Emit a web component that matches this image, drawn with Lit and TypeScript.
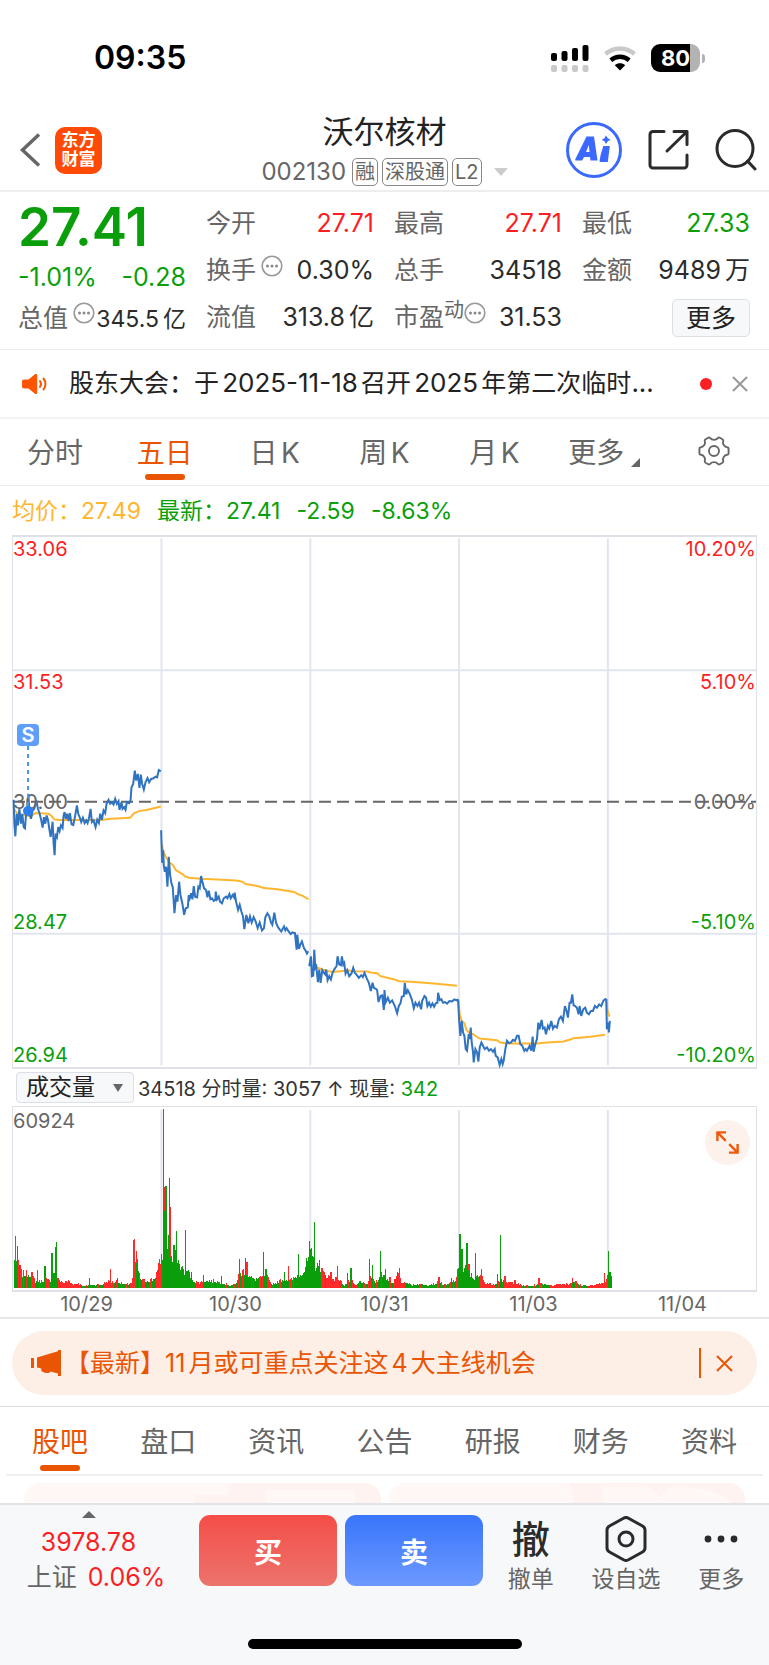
import { LitElement, html, svg, css } from "lit";
import { customElement, property, state } from "lit/decorators.js";
import { classMap } from "lit/directives/class-map.js";

/** One trading session: its drawing origin, the price line and the average line. */
interface Session {
  dx: number;
  dy: number;
  price: string;
  average: string;
}

const SESSIONS: Session[] = [
  {
    dx: -36,
    dy: -165,
    price:
      "38,958 40,1030 43,1068 47,1000 51,1035 55,985 60,1030 64,1000 68,1040 72,1044 75,1005 78,990 82,940 86,1000 90,1015 95,990 100,985 106,960 111,985 116,1000 121,1020 125,1042 129,1010 133,1030 137,1005 141,1018 145,1045 149,1070 152,1050 155,1024 158,1090 161,1125 164,1060 168,1070 172,1040 176,1052 180,1035 185,1043 188,1005 191,995 195,1015 199,1000 203,1022 207,998 212,1032 217,1034 222,1010 228,975 232,1000 237,1012 241,1025 246,1012 251,1028 256,1020 260,1028 264,1015 269,985 273,1025 278,1020 284,1040 289,1018 294,1028 298,1000 303,1018 308,990 313,998 317,970 323,958 328,970 333,965 338,972 343,955 348,970 353,962 356,988 362,965 365,985 370,980 374,988 378,965 385,968 389,960 392,920 397,910 402,870 406,900 411,880 416,922 420,882 424,910 429,927 434,905 440,892 445,905 451,895 458,893 464,888 469,890 474,868 480,872",
    average:
      "38,985 50,1000 75,1005 90,1008 97,1002 103,998 143,1000 150,1005 160,1017 175,1019 300,1019 330,1015 388,1012 400,998 415,992 440,988 465,982 480,978",
  },
  {
    dx: 414,
    dy: 795,
    price:
      "31,90 34,188 37,150 39,195 42,215 46,200 50,260 54,170 58,225 62,250 66,262 71,340 76,285 80,305 85,245 89,285 95,312 100,345 105,325 111,322 114,285 117,295 121,280 125,298 129,258 133,290 139,292 143,260 147,265 151,228 156,250 160,265 166,270 170,292 174,272 179,298 184,295 189,303 194,300 195,275 199,298 204,290 208,305 214,310 219,295 226,290 230,295 236,282 240,295 246,285 250,292 252,278 256,305 262,330 267,315 272,335 277,350 281,388 287,345 293,370 298,350 303,368 309,352 315,365 321,385 327,368 334,392 340,385 344,352 350,340 356,350 361,368 365,375 371,338 376,368 382,382 388,390 392,395 400,380 404,392 408,385 414,395 420,403 425,398 433,400 438,450 440,405 445,448 449,435 454,425 460,445 466,455 469,462 473,455",
    average:
      "33,130 38,155 46,172 56,188 65,193 75,210 85,216 95,222 102,229 115,233 150,236 200,238 255,241 275,245 285,252 320,258 340,264 380,268 430,276 445,284 455,287 470,296 474,297",
  },
  {
    dx: 414,
    dy: 795,
    price:
      "476,500 481,470 484,530 488,528 491,450 494,505 497,500 502,548 506,510 510,550 515,512 520,520 524,525 527,510 531,542 536,530 541,540 546,520 552,508 558,500 561,470 566,495 571,497 574,470 578,495 581,490 585,522 590,512 596,530 603,522 608,505 613,520 619,527 625,535 632,527 637,533 642,520 648,535 655,550 661,575 666,550 670,565 676,568 680,572 684,608 690,590 695,588 700,632 702,572 705,610 712,595 718,610 725,603 733,620 740,642 745,620 750,612 754,592 760,590 763,550 767,585 772,572 777,582 784,600 790,627 795,610 801,620 806,610 812,630 815,605 822,590 827,595 831,620 836,610 841,622 846,612 851,622 856,612 861,610 863,580 868,602 873,600 878,610 884,608 890,613 897,605 905,606 912,600 918,603 923,600",
    average:
      "490,500 510,508 530,514 545,517 570,515 590,512 610,515 650,516 660,519 680,521 690,530 710,535 730,539 745,545 780,547 850,552 920,559",
  },
  {
    dx: 1164,
    dy: 1095,
    price:
      "173,300 176,360 180,410 184,365 188,400 192,410 196,450 200,455 205,405 208,420 211,385 214,430 218,460 220,490 225,450 230,460 234,488 238,445 243,430 248,440 253,450 260,445 266,455 272,450 278,458 283,450 286,470 292,475 298,498 303,480 307,495 310,485 315,450 320,425 326,432 332,430 338,422 344,425 350,410 355,410 360,435 366,440 372,455 376,450 380,455 388,440 393,455 397,412 400,458 405,435 410,420 414,370 418,390 421,375 424,362 428,388 433,385 437,405 443,380 447,388 453,365 458,388 463,380 470,385 476,360 482,352 488,365 494,320 499,335 503,355 508,310 512,310 516,285 520,318 525,320 530,325 535,345 538,320 543,350 549,330 555,325 560,340 566,345 572,335 578,335 584,320 590,325 597,315 603,320 610,303 618,298",
    average:
      "174,302 178,345 184,365 192,372 198,392 205,400 218,405 228,412 238,418 290,423 300,430 320,433 410,433 440,430 490,427 510,421 520,417 570,413 615,407",
  },
  {
    dx: 1164,
    dy: 1095,
    price: "618,298 620,390 624,370 626,400 629,365",
    average: "619,300 622,335 628,352",
  },
];

/** Typical volume along the time axis, as x/height anchors. */
const VOLUME_LEVEL: number[][] = [
  [38, 95], [50, 90], [60, 50], [90, 50], [100, 25], [120, 25], [130, 30], [145, 25], [160, 60], [170, 30],
  [185, 20], [200, 25], [215, 15], [230, 18], [245, 8], [270, 12], [300, 12], [320, 25], [335, 20], [345, 25],
  [370, 12], [390, 18], [398, 70], [405, 90], [412, 60], [420, 30], [435, 25], [450, 30], [460, 32], [470, 60],
  [485, 120], [490, 300], [495, 250], [500, 170], [508, 130], [515, 90], [525, 140], [535, 80], [550, 60],
  [560, 60], [575, 30], [590, 20], [610, 25], [640, 25], [660, 20], [690, 10], [705, 15], [715, 50], [730, 60],
  [745, 40], [760, 30], [780, 35], [795, 50], [810, 15], [830, 20], [850, 35], [865, 25], [880, 35], [895, 50],
  [910, 60], [925, 110], [935, 110], [945, 70], [955, 70], [970, 50], [985, 40], [1000, 35], [1015, 30],
  [1030, 10], [1050, 30], [1065, 8], [1080, 25], [1095, 10], [1110, 35], [1125, 20], [1140, 50], [1154, 40],
  [1164, 25], [1177, 20], [1192, 45], [1202, 20], [1217, 22], [1232, 12], [1252, 14], [1282, 12], [1302, 15],
  [1317, 22], [1332, 10], [1352, 20], [1367, 30], [1377, 110], [1387, 60], [1397, 70], [1407, 50], [1417, 35],
  [1442, 40], [1452, 20], [1472, 14], [1487, 18], [1502, 30], [1517, 20], [1542, 20], [1562, 10], [1592, 8],
  [1617, 15], [1632, 15], [1652, 10], [1672, 15], [1702, 15], [1722, 25], [1737, 12], [1762, 8], [1792, 12],
  [1812, 25], [1822, 45], [1827, 50], [1835, 30],
];

/** Single bars that stand out: x, height, rising (1) or falling (0). */
const VOLUME_SPIKES: number[][] = [
  [43, 158, 1], [48, 128, 0], [109, 55, 1], [131, 68, 0], [152, 107, 0], [163, 125, 0], [166, 140, 0],
  [264, 30, 0], [327, 57, 1], [348, 32, 0], [396, 145, 1], [399, 150, 1], [405, 112, 1], [409, 90, 0],
  [487, 540, 0], [491, 305, 1], [495, 310, 0], [505, 333, 0], [508, 245, 1], [519, 130, 0], [526, 172, 0],
  [553, 175, 0], [572, 50, 0], [607, 40, 0], [661, 37, 0], [715, 88, 0], [733, 92, 0], [738, 80, 1],
  [788, 109, 0], [795, 58, 0], [850, 50, 0], [863, 66, 1], [893, 105, 0], [925, 142, 0], [932, 122, 1],
  [940, 201, 0], [955, 85, 0], [965, 62, 1], [990, 50, 1], [1009, 68, 1], [1039, 47, 0], [1050, 60, 0],
  [1105, 90, 0], [1115, 70, 0], [1138, 113, 0], [1154, 57, 0], [1168, 35, 1], [1190, 50, 0], [1197, 60, 1],
  [1315, 33, 1], [1352, 30, 0], [1372, 55, 1], [1378, 163, 0], [1384, 118, 0], [1399, 137, 0], [1405, 72, 1],
  [1425, 107, 0], [1442, 58, 1], [1490, 42, 0], [1500, 162, 0], [1513, 38, 1], [1543, 26, 1], [1615, 32, 1],
  [1715, 30, 1], [1812, 45, 1], [1823, 112, 0], [1828, 50, 0], [1833, 25, 0],
];

const RISING_RANGES = [
  [176, 236], [310, 335], [385, 401], [465, 484], [592, 606], [975, 1015], [1200, 1212], [1442, 1482],
  [1517, 1552], [1652, 1712], [1772, 1820],
];
const FALLING_RANGES = [[486, 570], [905, 960], [1375, 1437], [1821, 1840]];

const inside = (ranges: number[][], x: number) => ranges.some(([a, b]) => x >= a && x <= b);

function levelAt(x: number): number {
  for (let i = 1; i < VOLUME_LEVEL.length; i++) {
    const [x0, h0] = VOLUME_LEVEL[i - 1];
    const [x1, h1] = VOLUME_LEVEL[i];
    if (x <= x1) return h0 + ((h1 - h0) * (x - x0)) / (x1 - x0);
  }
  return 0;
}

/** Builds one path of bars for each direction. */
function volumePaths(): { up: string; down: string } {
  const base = 547;
  let up = "";
  let down = "";
  let seed = 7;
  for (let x = 38; x <= 1833; x += 3) {
    seed = (seed * 1103515245 + 12345) % 2147483648;
    const noise = seed / 2147483648;
    const height = Math.max(6, Math.round(levelAt(x) * (0.65 + noise * 0.45)));
    const rising = inside(RISING_RANGES, x) || (!inside(FALLING_RANGES, x) && noise > 0.66);
    const bar = `M${x} ${base}v${-height}h3v${height}z`;
    if (rising) up += bar;
    else down += bar;
  }
  for (const [x, height, rising] of VOLUME_SPIKES) {
    const bar = `M${x - 1} ${base}v${-height}h4v${height}z`;
    if (rising) up += bar;
    else down += bar;
  }
  return { up, down };
}

const VOLUME = volumePaths();

const shared = css`
  :host,
  * {
    box-sizing: border-box;
  }
  button,
  select {
    font: inherit;
    color: inherit;
    border: 0;
    margin: 0;
    padding: 0;
    background: none;
    cursor: pointer;
  }
  a {
    color: inherit;
    text-decoration: none;
  }
  svg {
    display: block;
    flex: none;
  }
`;

@customElement("status-bar")
export class StatusBar extends LitElement {
  static styles = [
    shared,
    css`
      :host {
        display: flex;
        justify-content: space-between;
        align-items: center;
        padding: 34px 64px 32px 94px;
        color: #000;
      }
      .time {
        font-size: 32px;
        line-height: 48px;
        font-weight: 600;
      }
      .icons {
        display: flex;
        align-items: center;
        gap: 15px;
      }
      .battery {
        display: flex;
        align-items: center;
        gap: 2px;
      }
      .cell {
        width: 49px;
        height: 28px;
        border-radius: 9px;
        background: linear-gradient(90deg, #000 80%, #b3b3b3 80%);
        color: #fff;
        font-size: 22px;
        line-height: 28px;
        font-weight: 700;
        text-align: center;
      }
      .nub {
        width: 3px;
        height: 9px;
        border-radius: 0 3px 3px 0;
        background: #b3b3b3;
      }
    `,
  ];

  render() {
    return html`
      <span class="time">09:35</span>
      <div class="icons">
        <svg width="38" height="27" viewBox="0 0 38 27" aria-hidden="true">
          <g fill="#000">
            <rect x="0" y="8" width="6" height="8" rx="2" />
            <rect x="10.500" y="6" width="6" height="10" rx="2" />
            <rect x="21" y="3" width="6" height="13" rx="2" />
            <rect x="31.500" y="0" width="6" height="16" rx="2" />
          </g>
          <g fill="#c9c9c9">
            <rect x="0" y="20" width="6" height="7" rx="2" />
            <rect x="10.500" y="20" width="6" height="7" rx="2" />
            <rect x="21" y="20" width="6" height="7" rx="2" />
            <rect x="31.500" y="20" width="6" height="7" rx="2" />
          </g>
        </svg>
        <svg width="32" height="25" viewBox="0 0 32 25" fill="none" aria-hidden="true">
          <path d="M1.500 8C10 .6 22 .6 30.500 8" stroke="#c9c9c9" stroke-width="4.400" />
          <path d="M6.800 14.200c5.500-4.600 12.900-4.600 18.400 0" stroke="#000" stroke-width="4.400" />
          <path d="M16 24.500l-5.200-5.300c3-2.500 7.400-2.500 10.400 0z" fill="#000" />
        </svg>
        <div class="battery"><span class="cell">80</span><span class="nub"></span></div>
      </div>
    `;
  }
}

@customElement("stock-header")
export class StockHeader extends LitElement {
  static styles = [
    shared,
    css`
      :host {
        display: grid;
        grid-template-columns: 1fr auto 1fr;
        align-items: center;
        height: 78px;
        padding: 0 12px 10px;
        border-bottom: 2px solid #eee;
      }
      .left,
      .right {
        display: flex;
        align-items: center;
      }
      .left {
        gap: 11px;
        padding-left: 6px;
      }
      .right {
        justify-content: flex-end;
        gap: 25px;
      }
      .brand {
        width: 47px;
        height: 47px;
        border-radius: 10px;
        background: #ff4a05;
        color: #fff;
        font-size: 17px;
        line-height: 19px;
        font-weight: 700;
        text-align: center;
        padding-top: 4px;
      }
      .middle {
        display: flex;
        flex-direction: column;
        align-items: center;
        gap: 8px;
      }
      h1 {
        margin: 0;
        font-size: 31px;
        line-height: 36px;
        font-weight: 400;
        color: #222;
      }
      .code {
        display: flex;
        align-items: center;
        gap: 4px;
        color: #666;
        font-size: 24px;
        line-height: 28px;
      }
      .number {
        padding-right: 2px;
      }
      .tag {
        border: 1px solid #888;
        border-radius: 5px;
        padding: 0 2px;
        font-size: 20px;
        line-height: 26px;
      }
      .caret {
        margin-left: 8px;
      }
    `,
  ];

  render() {
    return html`
      <div class="left">
        <button aria-label="返回">
          <svg width="26" height="36" viewBox="0 0 26 36" fill="none" stroke="#666" stroke-width="3.500">
            <path d="M21 2.500L4.500 18L21 33.500" />
          </svg>
        </button>
        <div class="brand">东方<br />财富</div>
      </div>
      <div class="middle">
        <h1>沃尔核材</h1>
        <div class="code">
          <span class="number">002130</span>
          <span class="tag">融</span>
          <span class="tag">深股通</span>
          <span class="tag">L2</span>
          <svg class="caret" width="14" height="8" viewBox="0 0 14 8"><path d="M0 0h14L7 8z" fill="#ccc" /></svg>
        </div>
      </div>
      <div class="right">
        <button aria-label="Ai">
          <svg width="58" height="58" viewBox="0 0 58 58">
            <circle cx="29" cy="29" r="26.500" fill="none" stroke="#3b68ff" stroke-width="3" />
            <path
              fill="#3b68ff"
              fill-rule="evenodd"
              d="M21.500 15.500h7.500l3.500 24h-7l-.5-3.500h-6l-1.800 3.500h-6.200c-.8 0-1-.6-.7-1.300zM21 31h3.500l-.7-7z"
            />
            <path fill="#3b68ff" d="M38.300 25h6.500l-2 16h-7.500c-.6 0-.8-.4-.7-.9l1-6zM41 14.500l1.800 2.700 2.700 1.500-2.700 1.500-1.800 2.700-1.600-2.700-2.700-1.500 2.700-1.500z" />
          </svg>
        </button>
        <button aria-label="分享">
          <svg width="42" height="42" viewBox="0 0 42 42" fill="none" stroke="#2b2b2b" stroke-width="3" stroke-linecap="round" stroke-linejoin="round">
            <path d="M16 2.500H5a3 3 0 0 0-3 3V36a3 3 0 0 0 3 3h31a3 3 0 0 0 3-3V26M26 2.500h13v13M39 2.500L19 22" />
          </svg>
        </button>
        <button aria-label="搜索">
          <svg width="42" height="42" viewBox="0 0 42 42" fill="none" stroke="#2b2b2b" stroke-width="3" stroke-linecap="round">
            <circle cx="20" cy="19.500" r="18" />
            <path d="M32.500 32l7.500 8" />
          </svg>
        </button>
      </div>
    `;
  }
}

@customElement("quote-panel")
export class QuotePanel extends LitElement {
  static styles = [
    shared,
    css`
      :host {
        display: grid;
        grid-template-columns: repeat(4, minmax(0, 1fr));
        column-gap: 20px;
        padding: 8px 19px 8px 18px;
        border-bottom: 1px solid #ececec;
        color: #2b2b2b;
        font-size: 25px;
      }
      .column {
        display: grid;
        grid-template-rows: 47px 47px 47px;
      }
      .lead {
        grid-template-rows: 54px 47px 40px;
      }
      .cell {
        display: flex;
        justify-content: space-between;
        align-items: baseline;
        line-height: 47px;
        white-space: nowrap;
      }
      .label {
        display: flex;
        align-items: baseline;
        color: #666;
      }
      .hint {
        align-self: center;
        padding: 0 0 10px 5px;
      }
      .tight {
        padding-left: 0;
      }
      .small {
        align-self: flex-start;
        font-size: 20px;
        line-height: 32px;
      }
      .unit {
        padding-left: 4px;
      }
      .price {
        font-size: 53px;
        line-height: 54px;
        font-weight: 600;
      }
      .total {
        line-height: 34px;
      }
      .total .value {
        font-size: 23px;
      }
      .up {
        color: #fb1f24;
      }
      .down {
        color: #0a9f0a;
      }
      .end {
        justify-content: flex-end;
        align-items: center;
      }
      .more {
        height: 38px;
        padding: 0 13px;
        border: 1px solid #dcdfe4;
        border-radius: 5px;
        background: #f7f8fa;
        line-height: 34px;
        color: #222;
      }
    `,
  ];

  private hint(tight = false) {
    return html`<span class=${classMap({ hint: true, tight })}>
      <svg width="22" height="22" viewBox="0 0 22 22" aria-hidden="true">
        <circle cx="11" cy="11" r="9.800" fill="none" stroke="#999" stroke-width="1.600" />
        <g fill="#888"><circle cx="6.500" cy="11" r="1.500" /><circle cx="11" cy="11" r="1.500" /><circle cx="15.500" cy="11" r="1.500" /></g>
      </svg>
    </span>`;
  }

  render() {
    return html`
      <div class="column lead">
        <div class="cell price down">27.41</div>
        <div class="cell down"><span>-1.01%</span><span>-0.28</span></div>
        <div class="cell total">
          <span class="label">总值${this.hint()}</span><span class="value">345.5<span class="unit">亿</span></span>
        </div>
      </div>
      <div class="column">
        <div class="cell"><span class="label">今开</span><span class="up">27.71</span></div>
        <div class="cell"><span class="label">换手${this.hint()}</span><span>0.30%</span></div>
        <div class="cell"><span class="label">流值</span><span>313.8<span class="unit">亿</span></span></div>
      </div>
      <div class="column">
        <div class="cell"><span class="label">最高</span><span class="up">27.71</span></div>
        <div class="cell"><span class="label">总手</span><span>34518</span></div>
        <div class="cell"><span class="label">市盈<span class="small">动</span>${this.hint(true)}</span><span>31.53</span></div>
      </div>
      <div class="column">
        <div class="cell"><span class="label">最低</span><span class="down">27.33</span></div>
        <div class="cell"><span class="label">金额</span><span>9489<span class="unit">万</span></span></div>
        <div class="cell end"><button class="more">更多</button></div>
      </div>
    `;
  }
}

@customElement("notice-row")
export class NoticeRow extends LitElement {
  static styles = [
    shared,
    css`
      :host {
        display: flex;
        align-items: center;
        height: 69px;
        padding: 0 21px;
        border-bottom: 2px solid #f4f4f4;
        color: #222;
      }
      .text {
        flex: 1;
        min-width: 0;
        padding: 0 0 2px 21px;
        font-size: 25px;
        line-height: 36px;
        white-space: nowrap;
        text-autospace: normal;
      }
      .digits {
        font-size: 26px;
      }
      .dot {
        width: 12px;
        height: 12px;
        margin-right: 20px;
        border-radius: 50%;
        background: #fb1f24;
      }
    `,
  ];

  render() {
    return html`
      <svg width="27" height="24" viewBox="0 0 27 24" aria-hidden="true">
        <path fill="#ff5500" d="M3 7.500h4.500L14 2.300c1-.8 2.200-.4 2.200 1v17.400c0 1.400-1.200 1.800-2.200 1L7.500 16.500H3c-1.300 0-2-.8-2-2v-5c0-1.200.7-2 2-2z" />
        <path fill="none" stroke="#ff5500" stroke-width="2" stroke-linecap="round" d="M19 9c1.200 1.800 1.200 4.200 0 6M22.500 6.500c2.600 3.200 2.600 7.800 0 11" />
      </svg>
      <a class="text" href="#notice"
        >股东大会：于<span class="digits">2025-11-18</span>召开<span class="digits">2025</span>年第二次临时<span class="digits">...</span></a
      >
      <span class="dot"></span>
      <button aria-label="关闭">
        <svg width="16" height="16" viewBox="0 0 16 16" stroke="#999" stroke-width="2"><path d="M1 1l14 14M15 1L1 15" /></svg>
      </button>
    `;
  }
}

@customElement("period-tabs")
export class PeriodTabs extends LitElement {
  @state() private active = "五日";

  static styles = [
    shared,
    css`
      :host {
        display: flex;
        height: 67px;
        border-bottom: 1px solid #ececec;
        color: #666;
        font-size: 28px;
      }
      .tab {
        position: relative;
        flex: 1;
        display: flex;
        justify-content: center;
        align-items: center;
        padding-bottom: 3px;
        text-autospace: normal;
      }
      .active {
        color: #ea5504;
      }
      .active::after {
        content: "";
        position: absolute;
        bottom: 5px;
        width: 40px;
        height: 6px;
        border-radius: 3px;
        background: #ea5504;
      }
      .corner {
        margin: 24px 0 0 7px;
      }
    `,
  ];

  render() {
    return html`
      ${["分时", "五日", "日K", "周K", "月K"].map(
        (name) => html`<button class=${classMap({ tab: true, active: this.active === name })} @click=${() => (this.active = name)}>${name}</button>`
      )}
      <button class="tab">更多<svg class="corner" width="9" height="9" viewBox="0 0 9 9"><path d="M9 0v9H0z" fill="#666" /></svg></button>
      <button class="tab" aria-label="设置">
        <svg width="32" height="30" viewBox="0 0 32 30" fill="none" stroke="#666" stroke-width="1.900" stroke-linejoin="round">
          <path d="M12.200 2.200c1.800 2.200 5.800 2.200 7.600 0 .5-.7 1.300-.8 2-.4l2.600 1.500c.8.500 1 1.100.8 2-.8 2.700 1 5.400 3.900 5.900.9.100 1.500.6 1.500 1.500v4.600c0 .9-.6 1.400-1.500 1.500-2.900.5-4.700 3.200-3.900 5.900.2.900 0 1.500-.8 2l-2.600 1.500c-.7.400-1.500.3-2-.4-1.800-2.200-5.800-2.200-7.600 0-.5.700-1.300.8-2 .4l-2.600-1.500c-.8-.5-1-1.100-.8-2 .8-2.700-1-5.400-3.900-5.900-.9-.1-1.500-.6-1.500-1.500v-4.600c0-.9.600-1.400 1.500-1.500 2.900-.5 4.700-3.200 3.900-5.900-.2-.9 0-1.500.8-2l2.600-1.500c.7-.4 1.500-.3 2 .4z" />
          <circle cx="16" cy="15" r="5" />
        </svg>
      </button>
    `;
  }
}

@customElement("price-chart")
export class PriceChart extends LitElement {
  static styles = [
    shared,
    css`
      :host {
        display: block;
        padding: 0 12px;
      }
      .legend {
        display: flex;
        align-items: baseline;
        height: 49px;
        line-height: 50px;
        font-size: 23px;
        color: #0a9f0a;
        white-space: nowrap;
      }
      .legend span {
        padding-right: 16px;
      }
      .legend .average {
        color: #ffb62e;
      }
      .plot {
        position: relative;
        height: 534px;
        border: solid #dfe1e8;
        border-width: 2px 1px 2px;
      }
      .canvas {
        width: 100%;
        height: 100%;
        overflow: visible;
      }
      .grid {
        stroke: #e2e5ee;
        stroke-width: 2;
      }
      .zero {
        stroke: #666;
        stroke-width: 2;
        stroke-dasharray: 12 6;
      }
      .grid,
      .zero,
      .line {
        vector-effect: non-scaling-stroke;
      }
      .line {
        fill: none;
        stroke: #2f73c1;
        stroke-width: 2;
        stroke-linejoin: miter;
      }
      .mean {
        stroke: #ffb62e;
      }
      .scale {
        position: absolute;
        inset: 0 auto 0 0;
        display: grid;
        grid-template-rows: 133px 120px 120px 133px 24px;
        font-size: 20px;
        line-height: 24px;
        color: #666;
      }
      .percent {
        inset: 0 0 0 auto;
        text-align: right;
      }
      .up {
        color: #fb1f24;
      }
      .down {
        color: #0a9f0a;
      }
      .marker {
        position: absolute;
        left: 4px;
        top: 187px;
        display: flex;
        flex-direction: column;
        align-items: center;
        width: 22px;
      }
      .badge {
        width: 22px;
        height: 22px;
        border-radius: 4px;
        background: #5f9ffb;
        color: #fff;
        font-size: 20px;
        line-height: 22px;
        font-weight: 600;
        text-align: center;
      }
      .stem {
        width: 2px;
        height: 60px;
        background: repeating-linear-gradient(#4c94f8 0 4px, transparent 4px 8px);
      }
      .point {
        width: 10px;
        height: 10px;
        border-radius: 50%;
        background: #2d7ff0;
      }
    `,
  ];

  render() {
    return html`
      <div class="legend">
        <span class="average">均价：27.49</span><span>最新：27.41</span><span>-2.59</span><span>-8.63%</span>
      </div>
      <div class="plot">
        <div class="scale">
          <span class="up">33.06</span><span class="up">31.53</span><span>30.00</span><span class="down">28.47</span><span class="down">26.94</span>
        </div>
        <div class="scale percent">
          <span class="up">10.20%</span><span class="up">5.10%</span><span>0.00%</span><span class="down">-5.10%</span><span class="down">-10.20%</span>
        </div>
        <svg class="canvas" viewBox="0 0 2232 1599" preserveAspectRatio="none" aria-hidden="true">
          <path class="grid" d="M446 4V1594M893 4V1594M1340 4V1594M1787 4V1594M0 402H2232M0 1197H2232" />
          <path class="zero" d="M0 799H2232" />
          ${SESSIONS.map(
            (s) => svg`<g transform="translate(${s.dx} ${s.dy})">
              <polyline class="line mean" points=${s.average} />
              <polyline class="line" points=${s.price} />
            </g>`
          )}
        </svg>
        <div class="marker"><span class="badge">S</span><span class="stem"></span><span class="point"></span></div>
      </div>
    `;
  }
}

@customElement("volume-chart")
export class VolumeChart extends LitElement {
  static styles = [
    shared,
    css`
      :host {
        display: block;
        border-bottom: 2px solid #e6e7ea;
        color: #333;
      }
      .bar {
        display: flex;
        align-items: center;
        height: 37px;
        padding: 0 16px;
        font-size: 20px;
        white-space: nowrap;
      }
      .picker {
        display: flex;
        align-items: center;
        margin-right: 4px;
        padding-right: 10px;
        border: 1px solid #dcdfe6;
        border-radius: 4px;
        background: #f7f8fa;
      }
      select {
        appearance: none;
        width: 84px;
        padding-left: 9px;
        font-size: 23px;
        line-height: 29px;
        height: 29px;
        color: #222;
      }
      .caret {
        margin-left: 12px;
        pointer-events: none;
      }
      .down {
        color: #0a9f0a;
      }
      .plot {
        position: relative;
        height: 186px;
        margin: 0 12px;
        border: solid #dfe1e8;
        border-width: 1px 1px 2px;
      }
      .canvas {
        width: 100%;
        height: 100%;
      }
      .grid {
        stroke: #e2e5ee;
        stroke-width: 2;
        vector-effect: non-scaling-stroke;
      }
      .rise {
        fill: #ff2a2a;
      }
      .fall {
        fill: #0a9f0a;
      }
      .peak {
        position: absolute;
        left: 0;
        top: 2px;
        font-size: 20px;
        line-height: 24px;
        color: #666;
      }
      .expand {
        position: absolute;
        right: 6px;
        top: 13px;
        width: 45px;
        height: 45px;
        border-radius: 50%;
        background: #fdf1ec;
        display: flex;
        align-items: center;
        justify-content: center;
      }
      .dates {
        display: grid;
        grid-template-columns: repeat(5, 1fr);
        margin: 0 12px;
        font-size: 20px;
        line-height: 25px;
        color: #666;
        text-align: center;
      }
    `,
  ];

  render() {
    return html`
      <div class="bar">
        <div class="picker">
          <select aria-label="指标">
            <option selected>成交量</option>
            <option>成交额</option>
          </select>
          <svg class="caret" width="10" height="8" viewBox="0 0 10 8"><path d="M0 0h10L5 8z" fill="#666" /></svg>
        </div>
        <span>34518 分时量: 3057 ↑ 现量: <span class="down">342</span></span>
      </div>
      <div class="plot">
        <svg class="canvas" viewBox="36 0 2232 552" preserveAspectRatio="none" aria-hidden="true">
          <path class="grid" d="M482 9V546M929 9V546M1376 9V546M1823 9V546" />
          <g shape-rendering="crispEdges">
            <path class="rise" d=${VOLUME.up} />
            <path class="fall" d=${VOLUME.down} />
          </g>
        </svg>
        <span class="peak">60924</span>
        <button class="expand" aria-label="全屏">
          <svg width="23" height="23" viewBox="0 0 23 23" fill="none" stroke="#f0590c" stroke-width="2.400">
            <path d="M1.400 10V1.400H10M1.400 1.400l8.400 8.400M21.600 13v8.600H13M21.600 21.600l-8.400-8.400" />
          </svg>
        </button>
      </div>
      <div class="dates">
        <span>10/29</span><span>10/30</span><span>10/31</span><span>11/03</span><span>11/04</span>
      </div>
    `;
  }
}

@customElement("promo-banner")
export class PromoBanner extends LitElement {
  static styles = [
    shared,
    css`
      :host {
        display: block;
        padding: 12px 12px 11px;
        border-bottom: 1px solid #dedfe2;
      }
      .pill {
        display: flex;
        align-items: center;
        height: 64px;
        padding: 0 24px 0 19px;
        border-radius: 32px;
        background: #fdeee6;
        color: #ea5504;
      }
      .text {
        flex: 1;
        min-width: 0;
        padding-left: 3px;
        font-size: 25px;
        line-height: 36px;
        white-space: nowrap;
        text-autospace: normal;
      }
      .close {
        padding-left: 15px;
        border-left: 2px solid #ea5504;
        height: 30px;
      }
    `,
  ];

  render() {
    return html`
      <div class="pill">
        <svg width="31" height="28" viewBox="0 0 31 28" fill="#ea5504" aria-hidden="true">
          <path d="M0 9h3v10H0zM6 8.500L27 2.300V1h3v26h-3v-2.500l-7.500-2c-.8 1.400-2.700 2-4.300 1.300-1 .3-1.900 0-2.600-.9-1.100.2-2.100-.5-2.300-1.700v-1.700L6 18.500z" />
        </svg>
        <a class="text" href="#latest">【最新】11月或可重点关注这4大主线机会</a>
        <button class="close" aria-label="关闭">
          <svg width="17" height="17" viewBox="0 0 17 17" stroke="#ea5504" stroke-width="2"><path d="M1 1l15 15M16 1L1 16" /></svg>
        </button>
      </div>
    `;
  }
}

@customElement("section-tabs")
export class SectionTabs extends LitElement {
  @state() private active = "股吧";

  static styles = [
    shared,
    css`
      :host {
        display: block;
      }
      .tabs {
        display: flex;
        height: 69px;
        margin: 0 6px;
        border-bottom: 2px solid #efefef;
        color: #666;
        font-size: 28px;
      }
      .tab {
        position: relative;
        flex: 1;
        display: flex;
        justify-content: center;
        align-items: center;
        padding-bottom: 2px;
      }
      .active {
        color: #ea5504;
      }
      .active::after {
        content: "";
        position: absolute;
        bottom: 3px;
        width: 40px;
        height: 6px;
        border-radius: 3px;
        background: #ea5504;
      }
      .cards {
        display: grid;
        grid-template-columns: 1fr 1fr;
        gap: 8px;
        padding: 7px 24px 0;
      }
      .card {
        height: 20px;
        border-radius: 16px 16px 0 0;
        background: #fef3f1;
        overflow: hidden;
      }
      .card svg {
        width: 100%;
        height: 100%;
      }
    `,
  ];

  render() {
    return html`
      <div class="tabs">
        ${["股吧", "盘口", "资讯", "公告", "研报", "财务", "资料"].map(
          (name) => html`<button class=${classMap({ tab: true, active: this.active === name })} @click=${() => (this.active = name)}>${name}</button>`
        )}
      </div>
      <div class="cards" aria-hidden="true">
        <div class="card">
          <svg viewBox="0 0 356 20" preserveAspectRatio="none"><path fill="#fff8f6" d="M0 0h204v12h-34v8H0zM241 7h90v13h-90z" /></svg>
        </div>
        <div class="card">
          <svg viewBox="0 0 356 20" preserveAspectRatio="none"><path fill="#fff8f6" d="M0 0h181l3 20H0zM212 4h44c7 2 10 7 14 10 5-4 7-10 18-10 25 0 45 6 56 16H215z" /></svg>
        </div>
      </div>
    `;
  }
}

@customElement("trade-bar")
export class TradeBar extends LitElement {
  static styles = [
    shared,
    css`
      :host {
        display: flex;
        flex-direction: column;
        flex: 1;
        border-top: 2px solid #e2e3e6;
        background: #f7f8fa;
        color: #666;
      }
      .row {
        display: grid;
        grid-template-columns: 199fr 284fr 286fr;
        padding-top: 10px;
      }
      .index {
        display: flex;
        flex-direction: column;
        align-items: center;
        padding-right: 22px;
        font-size: 25px;
        line-height: 35px;
        white-space: nowrap;
      }
      .index svg {
        margin: -4px 0 7px;
      }
      .market {
        display: flex;
        gap: 11px;
        padding-left: 15px;
      }
      .up {
        color: #fb1f24;
      }
      .trades {
        display: flex;
        gap: 8px;
      }
      .trade {
        flex: 1;
        height: 71px;
        border-radius: 11px;
        color: #fff;
        font-size: 28px;
        font-weight: 700;
      }
      .buy {
        background: linear-gradient(#f54e48, #ec736d);
      }
      .sell {
        background: linear-gradient(#3876fb, #6d99ff);
      }
      .actions {
        display: flex;
      }
      .action {
        flex: 1;
        display: flex;
        flex-direction: column;
        align-items: center;
        font-size: 23px;
        line-height: 34px;
        white-space: nowrap;
      }
      .icon {
        display: flex;
        align-items: center;
        height: 47px;
        color: #2b2b2b;
        font-size: 38px;
        font-weight: 500;
      }
      .home {
        width: 274px;
        height: 10px;
        margin: 43px auto 16px;
        border-radius: 5px;
        background: #000;
      }
    `,
  ];

  render() {
    return html`
      <div class="row">
        <div class="index">
          <svg width="14" height="7" viewBox="0 0 14 7"><path d="M0 7h14L7 0z" fill="#666" /></svg>
          <span class="up">3978.78</span>
          <div class="market"><span>上证</span><span class="up">0.06%</span></div>
        </div>
        <div class="trades">
          <button class="trade buy">买</button>
          <button class="trade sell">卖</button>
        </div>
        <div class="actions">
          <button class="action"><span class="icon">撤</span>撤单</button>
          <button class="action">
            <span class="icon">
              <svg width="42" height="46" viewBox="0 0 42 46" fill="none" stroke="#2b2b2b" stroke-width="3">
                <path d="M18.500 2.200a5 5 0 0 1 5 0l14 7.800a5 5 0 0 1 2.500 4.400v17.200a5 5 0 0 1-2.500 4.400l-14 7.800a5 5 0 0 1-5 0l-14-7.800A5 5 0 0 1 2 31.600V14.400A5 5 0 0 1 4.500 10z" />
                <circle cx="21" cy="23" r="7" />
              </svg> </span
            >设自选
          </button>
          <button class="action">
            <span class="icon">
              <svg width="34" height="8" viewBox="0 0 34 8" fill="#2b2b2b">
                <circle cx="4" cy="4" r="3.400" /><circle cx="17" cy="4" r="3.400" /><circle cx="30" cy="4" r="3.400" />
              </svg> </span
            >更多
          </button>
        </div>
      </div>
      <div class="home"></div>
    `;
  }
}

@customElement("app-root")
export class AppRoot extends LitElement {
  @property() lang = "zh-CN";

  static styles = css`
    :host {
      display: flex;
      flex-direction: column;
      min-height: 100vh;
      background: #fff;
      font-family: Inter, "Noto Sans CJK SC", sans-serif;
    }
  `;

  render() {
    return html`
      <status-bar></status-bar>
      <stock-header></stock-header>
      <quote-panel></quote-panel>
      <notice-row></notice-row>
      <period-tabs></period-tabs>
      <price-chart></price-chart>
      <volume-chart></volume-chart>
      <promo-banner></promo-banner>
      <section-tabs></section-tabs>
      <trade-bar></trade-bar>
    `;
  }
}
